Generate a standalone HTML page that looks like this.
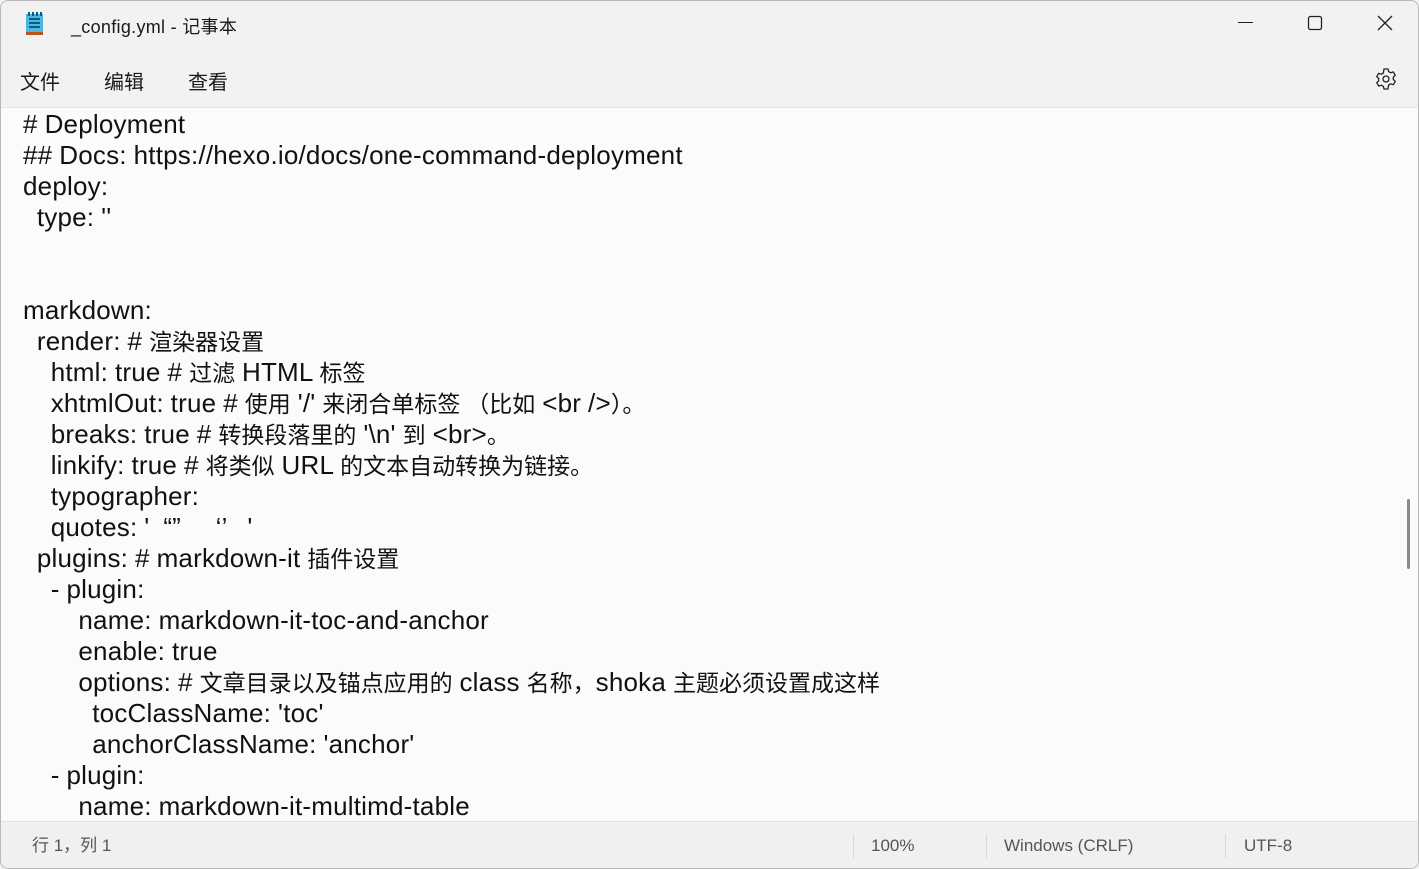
<!DOCTYPE html>
<html><head><meta charset="utf-8"><style>
*{margin:0;padding:0;box-sizing:border-box}
body{width:1419px;height:869px;overflow:hidden;background:#f3f3f3;font-family:"Liberation Sans","Noto Sans CJK SC",sans-serif;position:relative}
.win{position:absolute;left:0;top:0;width:1419px;height:869px;border:1px solid #b8b8b8;border-radius:8px;overflow:hidden;background:#f2f2f2}
.title{position:absolute;left:70px;top:12px;font-size:18px;letter-spacing:.3px;color:#1a1a1a}
.menu{position:absolute;top:65px;font-size:20px;color:#1a1a1a}
.edit{position:absolute;left:0;top:106px;width:1419px;height:714px;background:#fbfbfb;border-top:1px solid #e5e5e5;overflow:hidden}
.t{position:absolute;left:22px;top:1px;font-size:26px;letter-spacing:.2px;word-spacing:-.5px;color:#111}
.t div{height:31px;line-height:31px;white-space:pre}
.c{font-size:23px;letter-spacing:0;line-height:1;vertical-align:baseline}
.status{position:absolute;left:0;top:820px;width:1419px;height:49px;background:#eff1f1;border-top:1px solid #e2e2e2;font-size:17px;color:#555}
.status span{position:absolute;top:14px;line-height:20px}
.sep{position:absolute;top:12px;width:1px;height:24px;background:#d8d8d8}
</style></head><body><div class="win">
<svg style="position:absolute;left:24px;top:11px" width="20" height="24" viewBox="0 0 20 24"><rect x="1" y="2" width="17" height="19" fill="#4cb8e0"/><rect x="1" y="20" width="17" height="3" fill="#b5561c"/><g fill="#0d5b85"><rect x="3" y="0" width="2" height="4"/><rect x="7" y="0" width="2" height="4"/><rect x="11" y="0" width="2" height="4"/><rect x="15" y="0" width="2" height="4"/><rect x="4" y="6" width="11" height="2"/><rect x="4" y="10" width="11" height="2"/><rect x="4" y="14" width="11" height="2"/></g></svg>
<div class="title">_config.yml - 记事本</div>
<svg style="position:absolute;left:1236px;top:14px" width="160" height="20" viewBox="0 0 160 20"><line x1="1" y1="7.5" x2="16" y2="7.5" stroke="#222" stroke-width="1"/><rect x="71.5" y="1.5" width="13" height="13" rx="2" fill="none" stroke="#222" stroke-width="1.3"/><path d="M141 1L155 15M155 1L141 15" stroke="#222" stroke-width="1.3"/></svg>
<div class="menu" style="left:19px">文件</div><div class="menu" style="left:103px">编辑</div><div class="menu" style="left:187px">查看</div>
<svg style="position:absolute;left:1373px;top:66px" width="24" height="24" viewBox="0 0 24 24"><path d="M10 2h4l.6 2.6 2.2 1.2 2.5-.9 2 3.4-2 1.8v2.4l2 1.8-2 3.4-2.5-.9-2.2 1.2L14 22h-4l-.6-2.6-2.2-1.2-2.5.9-2-3.4 2-1.8v-2.4l-2-1.8 2-3.4 2.5.9 2.2-1.2z" fill="none" stroke="#222" stroke-width="1.3" stroke-linejoin="round"/><circle cx="12" cy="12" r="3" fill="none" stroke="#222" stroke-width="1.3"/></svg>
<div class="edit"><div class="t">
<div># Deployment</div>
<div>## Docs: https://hexo.io/docs/one-command-deployment</div>
<div>deploy:</div>
<div>  type: ''</div>
<div></div>
<div></div>
<div>markdown:</div>
<div>  render: # <span class="c">渲染器设置</span></div>
<div>    html: true # <span class="c">过滤</span> HTML <span class="c">标签</span></div>
<div>    xhtmlOut: true # <span class="c">使用</span> '/' <span class="c">来闭合单标签 （比如</span> &lt;br /&gt;<span class="c">）。</span></div>
<div>    breaks: true # <span class="c">转换段落里的</span> '\n' <span class="c">到</span> &lt;br&gt;<span class="c">。</span></div>
<div>    linkify: true # <span class="c">将类似</span> URL <span class="c">的文本自动转换为链接。</span></div>
<div>    typographer:</div>
<div>    quotes: '  “”     ‘’   '</div>
<div>  plugins: # markdown-it <span class="c">插件设置</span></div>
<div>    - plugin:</div>
<div>        name: markdown-it-toc-and-anchor</div>
<div>        enable: true</div>
<div>        options: # <span class="c">文章目录以及锚点应用的</span> class <span class="c">名称，</span>shoka <span class="c">主题必须设置成这样</span></div>
<div>          tocClassName: 'toc'</div>
<div>          anchorClassName: 'anchor'</div>
<div>    - plugin:</div>
<div>        name: markdown-it-multimd-table</div>
</div>
<div style="position:absolute;left:1406px;top:391px;width:3px;height:70px;border-radius:2px;background:#8a8a8a"></div></div>
<div class="status"><span style="left:31px">行 1，列 1</span><div class="sep" style="left:852px"></div><span style="left:870px">100%</span><div class="sep" style="left:985px"></div><span style="left:1003px">Windows (CRLF)</span><div class="sep" style="left:1224px"></div><span style="left:1243px">UTF-8</span></div>
</div></body></html>
